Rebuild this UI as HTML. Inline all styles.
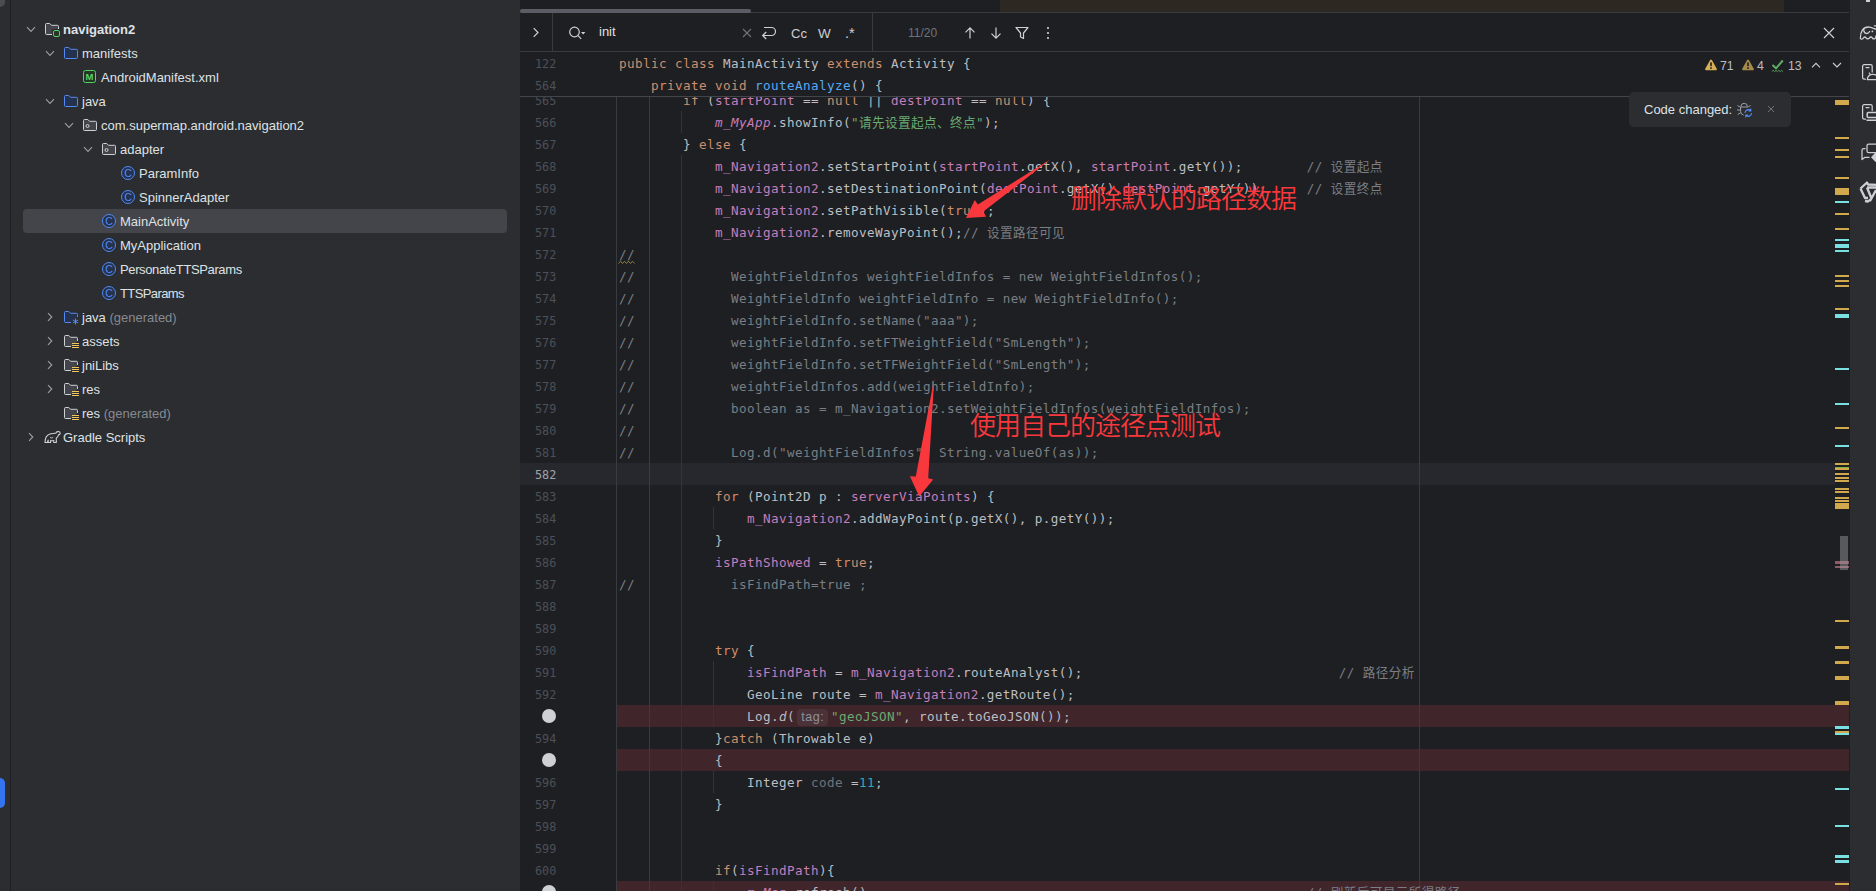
<!DOCTYPE html>
<html lang="zh"><head><meta charset="utf-8"><title>MainActivity</title>
<style>
html,body{margin:0;padding:0;background:#1E1F22;}
body{width:1876px;height:891px;overflow:hidden;position:relative;font-family:"Liberation Sans","Noto Sans CJK SC",sans-serif;font-size:13px;color:#DFE1E5;}
div,span,svg{position:absolute;box-sizing:border-box;}
span{position:static;}
.abs{position:absolute;}
#left{left:0;top:0;width:520px;height:891px;background:#2B2D30;}
.trow{left:0;width:520px;height:24px;line-height:24px;white-space:pre;}
.trow .tx{position:absolute;top:0;height:24px;line-height:25px;font-size:13px;color:#DFE1E5;}
.trow .g{color:#868A91;}
.trow svg{top:4px;}
#ed{left:520px;top:0;width:1329px;height:891px;background:#1E1F22;overflow:hidden;}
.code{left:619px;height:22px;line-height:22px;white-space:pre;font-family:"DejaVu Sans Mono","Noto Sans CJK SC",monospace;font-size:12.6px;letter-spacing:0.415px;color:#BCBEC4;margin-top:1px;}
.k{color:#CF8E6D;} .f{color:#C77DBB;} .sf{color:#C77DBB;font-style:italic;} .s{color:#6AAB73;} .n{color:#2AACB8;}
.c{color:#7A7E85;} .m{color:#56A8F5;} .u{color:#6F737A;} .i{font-style:italic;}
.z{font-weight:400;}
.wavy{text-decoration:underline wavy #8c7a3a;text-decoration-thickness:1px;text-underline-offset:2px;}
.hint{display:inline-block;position:relative;top:0px;height:17px;line-height:17px;margin:0 3px 0 2px;padding:0;width:31px;border-radius:4px;background:#4B3239;color:#8E929A;font-family:"Liberation Sans",sans-serif;font-size:12.5px;letter-spacing:0.6px;text-indent:0.6px;vertical-align:middle;text-align:center;}
.ln{left:0px;width:36.5px;text-align:right;height:22px;line-height:22px;font-family:"DejaVu Sans Mono",monospace;font-size:11.8px;letter-spacing:0.1px;color:#4B5059;margin-top:1px;}
.bp{background:#40252B;left:617px;width:1232px;height:22px;}
.dot{width:14px;height:14px;border-radius:7px;background:#CED0D6;left:542px;}
.vg{width:1px;background:#313438;}
.mk{left:1835px;width:14px;}
.y{background:#D2A84C;} .cy{background:#7ADFE0;}
.red{color:#F8383C;font-family:"Noto Sans CJK SC","Liberation Sans",sans-serif;font-size:26px;letter-spacing:-1px;line-height:30px;white-space:pre;font-weight:350;}
.ui{font-family:"Liberation Sans",sans-serif;font-size:13px;white-space:pre;}
</style></head><body>

<div id="left">
<div class="abs" style="left:0;top:0;width:5px;height:7px;background:#4B4D51;border-radius:0 0 5px 0;"></div>
<div class="abs" style="left:10px;top:0;width:1px;height:891px;background:#1E1F22;"></div>
<div class="abs" style="left:0;top:778px;width:5px;height:30px;background:#3574F0;border-radius:0 5px 5px 0;"></div>
<div class="abs" style="left:23px;top:209px;width:484px;height:24px;background:#43454A;border-radius:4px;"></div>
<div class="trow" style="top:17px">
<svg class="abs" style="left:26px;top:9px" width="10" height="7" viewBox="0 0 10 7"><path d="M1 1.2 L5 5.4 L9 1.2" fill="none" stroke="#9DA0A8" stroke-width="1.1"/></svg>
<svg class="abs" style="left:44px;top:4px" width="17" height="17" viewBox="0 0 17 17"><path d="M1.5 3.5 a1 1 0 0 1 1-1 h3.3 l1.7 1.8 h6 a1 1 0 0 1 1 1 v7.2 a1 1 0 0 1-1 1 h-11 a1 1 0 0 1-1-1 Z" fill="#43454A" stroke="#CED0D6" stroke-width="1"/><rect x="8" y="8" width="9" height="9" fill="#2B2D30"/><rect x="9.5" y="9.5" width="6" height="6" rx="1.5" fill="#253627" stroke="#57D163" stroke-width="1"/></svg>
<span class="tx" style="left:63px;font-weight:bold;">navigation2</span>
</div>
<div class="trow" style="top:41px">
<svg class="abs" style="left:45px;top:9px" width="10" height="7" viewBox="0 0 10 7"><path d="M1 1.2 L5 5.4 L9 1.2" fill="none" stroke="#9DA0A8" stroke-width="1.1"/></svg>
<svg class="abs" style="left:63px;top:4px" width="16" height="16" viewBox="0 0 16 16"><path d="M1.5 3.5 a1 1 0 0 1 1-1 h3.3 l1.7 1.8 h6 a1 1 0 0 1 1 1 v7.2 a1 1 0 0 1-1 1 h-11 a1 1 0 0 1-1-1 Z" fill="#25324D" stroke="#548AF7" stroke-width="1"/></svg>
<span class="tx" style="left:82px;">manifests</span>
</div>
<div class="trow" style="top:65px">
<svg class="abs" style="left:82px;top:4px" width="16" height="16" viewBox="0 0 16 16"><rect x="1.5" y="1.5" width="12" height="12" rx="2" fill="#253627" stroke="#57D163" stroke-width="1"/><text x="7.5" y="11.3" text-anchor="middle" font-family="Liberation Sans, sans-serif" font-weight="bold" font-size="9.5" fill="#57D163">M</text></svg>
<span class="tx" style="left:101px;">AndroidManifest.xml</span>
</div>
<div class="trow" style="top:89px">
<svg class="abs" style="left:45px;top:9px" width="10" height="7" viewBox="0 0 10 7"><path d="M1 1.2 L5 5.4 L9 1.2" fill="none" stroke="#9DA0A8" stroke-width="1.1"/></svg>
<svg class="abs" style="left:63px;top:4px" width="16" height="16" viewBox="0 0 16 16"><path d="M1.5 3.5 a1 1 0 0 1 1-1 h3.3 l1.7 1.8 h6 a1 1 0 0 1 1 1 v7.2 a1 1 0 0 1-1 1 h-11 a1 1 0 0 1-1-1 Z" fill="#25324D" stroke="#548AF7" stroke-width="1"/></svg>
<span class="tx" style="left:82px;">java</span>
</div>
<div class="trow" style="top:113px">
<svg class="abs" style="left:64px;top:9px" width="10" height="7" viewBox="0 0 10 7"><path d="M1 1.2 L5 5.4 L9 1.2" fill="none" stroke="#9DA0A8" stroke-width="1.1"/></svg>
<svg class="abs" style="left:82px;top:4px" width="16" height="16" viewBox="0 0 16 16"><path d="M1.5 3.5 a1 1 0 0 1 1-1 h3.3 l1.7 1.8 h6 a1 1 0 0 1 1 1 v7.2 a1 1 0 0 1-1 1 h-11 a1 1 0 0 1-1-1 Z" fill="#43454A" stroke="#CED0D6" stroke-width="1"/><circle cx="5.5" cy="9" r="1.5" fill="none" stroke="#CED0D6" stroke-width="1"/></svg>
<span class="tx" style="left:101px;">com.supermap.android.navigation2</span>
</div>
<div class="trow" style="top:137px">
<svg class="abs" style="left:83px;top:9px" width="10" height="7" viewBox="0 0 10 7"><path d="M1 1.2 L5 5.4 L9 1.2" fill="none" stroke="#9DA0A8" stroke-width="1.1"/></svg>
<svg class="abs" style="left:101px;top:4px" width="16" height="16" viewBox="0 0 16 16"><path d="M1.5 3.5 a1 1 0 0 1 1-1 h3.3 l1.7 1.8 h6 a1 1 0 0 1 1 1 v7.2 a1 1 0 0 1-1 1 h-11 a1 1 0 0 1-1-1 Z" fill="#43454A" stroke="#CED0D6" stroke-width="1"/><circle cx="5.5" cy="9" r="1.5" fill="none" stroke="#CED0D6" stroke-width="1"/></svg>
<span class="tx" style="left:120px;">adapter</span>
</div>
<div class="trow" style="top:161px">
<svg class="abs" style="left:120px;top:4px" width="16" height="16" viewBox="0 0 16 16"><circle cx="8" cy="8" r="6.5" fill="#25324D" stroke="#548AF7" stroke-width="1"/><text x="8" y="11.7" text-anchor="middle" font-family="Liberation Sans, sans-serif" font-size="10.5" fill="#548AF7">C</text></svg>
<span class="tx" style="left:139px;">ParamInfo</span>
</div>
<div class="trow" style="top:185px">
<svg class="abs" style="left:120px;top:4px" width="16" height="16" viewBox="0 0 16 16"><circle cx="8" cy="8" r="6.5" fill="#25324D" stroke="#548AF7" stroke-width="1"/><text x="8" y="11.7" text-anchor="middle" font-family="Liberation Sans, sans-serif" font-size="10.5" fill="#548AF7">C</text></svg>
<span class="tx" style="left:139px;">SpinnerAdapter</span>
</div>
<div class="trow" style="top:209px">
<svg class="abs" style="left:101px;top:4px" width="16" height="16" viewBox="0 0 16 16"><circle cx="8" cy="8" r="6.5" fill="#25324D" stroke="#548AF7" stroke-width="1"/><text x="8" y="11.7" text-anchor="middle" font-family="Liberation Sans, sans-serif" font-size="10.5" fill="#548AF7">C</text></svg>
<span class="tx" style="left:120px;">MainActivity</span>
</div>
<div class="trow" style="top:233px">
<svg class="abs" style="left:101px;top:4px" width="16" height="16" viewBox="0 0 16 16"><circle cx="8" cy="8" r="6.5" fill="#25324D" stroke="#548AF7" stroke-width="1"/><text x="8" y="11.7" text-anchor="middle" font-family="Liberation Sans, sans-serif" font-size="10.5" fill="#548AF7">C</text></svg>
<span class="tx" style="left:120px;">MyApplication</span>
</div>
<div class="trow" style="top:257px">
<svg class="abs" style="left:101px;top:4px" width="16" height="16" viewBox="0 0 16 16"><circle cx="8" cy="8" r="6.5" fill="#25324D" stroke="#548AF7" stroke-width="1"/><text x="8" y="11.7" text-anchor="middle" font-family="Liberation Sans, sans-serif" font-size="10.5" fill="#548AF7">C</text></svg>
<span class="tx" style="left:120px;letter-spacing:-0.38px;">PersonateTTSParams</span>
</div>
<div class="trow" style="top:281px">
<svg class="abs" style="left:101px;top:4px" width="16" height="16" viewBox="0 0 16 16"><circle cx="8" cy="8" r="6.5" fill="#25324D" stroke="#548AF7" stroke-width="1"/><text x="8" y="11.7" text-anchor="middle" font-family="Liberation Sans, sans-serif" font-size="10.5" fill="#548AF7">C</text></svg>
<span class="tx" style="left:120px;letter-spacing:-0.6px;">TTSParams</span>
</div>
<div class="trow" style="top:305px">
<svg class="abs" style="left:47px;top:7px" width="7" height="10" viewBox="0 0 7 10"><path d="M1 1.2 L4.8 5 L1 8.8" fill="none" stroke="#9DA0A8" stroke-width="1.1"/></svg>
<svg class="abs" style="left:63px;top:4px" width="17" height="17" viewBox="0 0 17 17"><path d="M8 13.5 H2.5 a1 1 0 0 1-1-1 V3.5 a1 1 0 0 1 1-1 h3.3 l1.7 1.8 h6 a1 1 0 0 1 1 1 V8" fill="#25324D" stroke="#548AF7" stroke-width="1"/><path d="M12.5 9.5 v6 M9.9 11 l5.2 3 M9.9 14 l5.2 -3" stroke="#548AF7" stroke-width="1" fill="none"/></svg>
<span class="tx" style="left:82px;">java <span class="g">(generated)</span></span>
</div>
<div class="trow" style="top:329px">
<svg class="abs" style="left:47px;top:7px" width="7" height="10" viewBox="0 0 7 10"><path d="M1 1.2 L4.8 5 L1 8.8" fill="none" stroke="#9DA0A8" stroke-width="1.1"/></svg>
<svg class="abs" style="left:63px;top:4px" width="17" height="17" viewBox="0 0 17 17"><path d="M8 13.5 H2.5 a1 1 0 0 1-1-1 V3.5 a1 1 0 0 1 1-1 h3.3 l1.7 1.8 h6 a1 1 0 0 1 1 1 V8" fill="#43454A" stroke="#CED0D6" stroke-width="1"/><path d="M9 10.5 h7 M9 12.5 h7 M9 14.5 h7" stroke="#F2C55C" stroke-width="1" fill="none"/></svg>
<span class="tx" style="left:82px;">assets</span>
</div>
<div class="trow" style="top:353px">
<svg class="abs" style="left:47px;top:7px" width="7" height="10" viewBox="0 0 7 10"><path d="M1 1.2 L4.8 5 L1 8.8" fill="none" stroke="#9DA0A8" stroke-width="1.1"/></svg>
<svg class="abs" style="left:63px;top:4px" width="17" height="17" viewBox="0 0 17 17"><path d="M8 13.5 H2.5 a1 1 0 0 1-1-1 V3.5 a1 1 0 0 1 1-1 h3.3 l1.7 1.8 h6 a1 1 0 0 1 1 1 V8" fill="#43454A" stroke="#CED0D6" stroke-width="1"/><path d="M9 10.5 h7 M9 12.5 h7 M9 14.5 h7" stroke="#F2C55C" stroke-width="1" fill="none"/></svg>
<span class="tx" style="left:82px;">jniLibs</span>
</div>
<div class="trow" style="top:377px">
<svg class="abs" style="left:47px;top:7px" width="7" height="10" viewBox="0 0 7 10"><path d="M1 1.2 L4.8 5 L1 8.8" fill="none" stroke="#9DA0A8" stroke-width="1.1"/></svg>
<svg class="abs" style="left:63px;top:4px" width="17" height="17" viewBox="0 0 17 17"><path d="M8 13.5 H2.5 a1 1 0 0 1-1-1 V3.5 a1 1 0 0 1 1-1 h3.3 l1.7 1.8 h6 a1 1 0 0 1 1 1 V8" fill="#43454A" stroke="#CED0D6" stroke-width="1"/><path d="M9 10.5 h7 M9 12.5 h7 M9 14.5 h7" stroke="#F2C55C" stroke-width="1" fill="none"/></svg>
<span class="tx" style="left:82px;">res</span>
</div>
<div class="trow" style="top:401px">
<svg class="abs" style="left:63px;top:4px" width="17" height="17" viewBox="0 0 17 17"><path d="M8 13.5 H2.5 a1 1 0 0 1-1-1 V3.5 a1 1 0 0 1 1-1 h3.3 l1.7 1.8 h6 a1 1 0 0 1 1 1 V8" fill="#43454A" stroke="#CED0D6" stroke-width="1"/><path d="M9 10.5 h7 M9 12.5 h7 M9 14.5 h7" stroke="#F2C55C" stroke-width="1" fill="none"/></svg>
<span class="tx" style="left:82px;">res <span class="g">(generated)</span></span>
</div>
<div class="trow" style="top:425px">
<svg class="abs" style="left:28px;top:7px" width="7" height="10" viewBox="0 0 7 10"><path d="M1 1.2 L4.8 5 L1 8.8" fill="none" stroke="#9DA0A8" stroke-width="1.1"/></svg>
<svg class="abs" style="left:44px;top:5px" width="17" height="14" viewBox="0 0 17 14"><path d="M1 12.5 C1 8 2.5 5 6 4 C8 3.4 10.5 3.6 12 3 C12.5 1.5 14.8 1 15.8 2.2 C16.6 3.3 15.8 4.8 14.6 4.6 C14.2 6.5 13.5 7.5 12.3 8 V12.5 H9.8 V10.5 C8.8 10.9 7.6 10.9 6.6 10.5 V12.5 H4.2 V10 C3.8 10.8 3.6 11.6 3.5 12.5 Z" fill="none" stroke="#CED0D6" stroke-width="1.1" stroke-linejoin="round"/><path d="M6 7.2 C6.8 8.2 8.2 8.2 9.2 7.2" fill="none" stroke="#CED0D6" stroke-width="1"/></svg>
<span class="tx" style="left:63px;">Gradle Scripts</span>
</div>
</div>
<div id="edwrap" class="abs" style="left:0;top:0;width:1876px;height:891px;">
<div class="abs" style="left:1000px;top:0;width:784px;height:12px;background:#2E2822;"></div>
<div class="abs" style="left:520px;top:12px;width:1329px;height:1px;background:#393B40;"></div>
<div class="abs" style="left:520px;top:9px;width:231px;height:4px;background:#5A5D63;border-radius:2px;"></div>
<div class="abs" style="left:520px;top:51px;width:1329px;height:1px;background:#393B40;"></div>
<div class="abs" style="left:552px;top:13px;width:1px;height:38px;background:#393B40;"></div>
<div class="abs" style="left:872px;top:13px;width:1px;height:38px;background:#393B40;"></div>
<svg class="abs" style="left:531px;top:26px" width="10" height="13" viewBox="0 0 10 13"><path d="M2.7 2.2 L7 6.5 L2.7 10.8" fill="none" stroke="#CED0D6" stroke-width="1.2"/></svg>
<svg class="abs" style="left:567px;top:24px" width="20" height="18" viewBox="0 0 20 18"><circle cx="7.5" cy="8" r="4.8" fill="none" stroke="#CED0D6" stroke-width="1.2"/><path d="M11 11.6 L14.2 14.8" stroke="#CED0D6" stroke-width="1.2"/><path d="M14 8 h4.4 l-2.2 2.4 z" fill="#CED0D6"/></svg>
<div class="abs ui" style="left:599px;top:23px;height:18px;line-height:18px;color:#DFE1E5;">init</div>
<svg class="abs" style="left:742px;top:28px" width="10" height="10" viewBox="0 0 10 10"><path d="M1 1 L9 9 M9 1 L1 9" stroke="#6F737A" stroke-width="1.1" fill="none"/></svg>
<svg class="abs" style="left:761px;top:25px" width="17" height="16" viewBox="0 0 17 16"><path d="M3 2.5 H10.5 a4 4 0 0 1 0 8 H2" fill="none" stroke="#CED0D6" stroke-width="1.2"/><path d="M5.2 7 L1.7 10.5 L5.2 14" fill="none" stroke="#CED0D6" stroke-width="1.2"/></svg>
<div class="abs ui" style="left:791px;top:25px;height:18px;line-height:18px;color:#CED0D6;">Cc</div>
<div class="abs ui" style="left:818px;top:25px;height:18px;line-height:18px;color:#CED0D6;font-size:13.5px;">W</div>
<div class="abs ui" style="left:845px;top:24px;height:18px;line-height:18px;color:#CED0D6;font-size:14.5px;">.*</div>
<div class="abs ui" style="left:908px;top:24px;height:18px;line-height:18px;color:#6F737A;font-size:12px;">11/20</div>
<svg class="abs" style="left:963px;top:26px" width="14" height="14" viewBox="0 0 14 14"><path d="M7 12.5 V2 M2.5 6.3 L7 1.8 L11.5 6.3" fill="none" stroke="#CED0D6" stroke-width="1.2"/></svg>
<svg class="abs" style="left:989px;top:26px" width="14" height="14" viewBox="0 0 14 14"><path d="M7 1.5 V12 M2.5 7.7 L7 12.2 L11.5 7.7" fill="none" stroke="#CED0D6" stroke-width="1.2"/></svg>
<svg class="abs" style="left:1014px;top:25px" width="16" height="16" viewBox="0 0 16 16"><path d="M2 2.5 H14 L9.5 8 V13.5 L6.5 12 V8 Z" fill="none" stroke="#CED0D6" stroke-width="1.2" stroke-linejoin="round"/></svg>
<svg class="abs" style="left:1046px;top:26px" width="4" height="14" viewBox="0 0 4 14"><circle cx="2" cy="2" r="1.1" fill="#CED0D6"/><circle cx="2" cy="7" r="1.1" fill="#CED0D6"/><circle cx="2" cy="12" r="1.1" fill="#CED0D6"/></svg>
<svg class="abs" style="left:1823px;top:27px" width="12" height="12" viewBox="0 0 12 12"><path d="M1 1 L11 11 M11 1 L1 11" stroke="#CED0D6" stroke-width="1.2" fill="none"/></svg>
<div class="abs" style="left:520px;top:463px;width:1315px;height:22px;background:#26282E;"></div>
<div class="bp" style="top:705px"></div>
<div class="bp" style="top:749px"></div>
<div class="bp" style="top:881px"></div>
<div class="vg" style="left:616px;top:97px;height:794px;background:#393B40;"></div>
<div class="vg" style="left:649px;top:97px;height:794px;background:#393B40;"></div>
<div class="vg" style="left:1419px;top:97px;height:794px;background:#393B40;"></div>
<div class="vg" style="left:681px;top:111px;height:22px;background:#313438"></div>
<div class="vg" style="left:681px;top:155px;height:748px;background:#313438"></div>
<div class="vg" style="left:713px;top:507px;height:22px;background:#313438"></div>
<div class="vg" style="left:713px;top:661px;height:66px;background:#313438"></div>
<div class="vg" style="left:713px;top:771px;height:22px;background:#313438"></div>
<div class="vg" style="left:713px;top:881px;height:22px;background:#313438"></div>
<svg class="abs" style="left:617px;top:258px" width="22" height="8" viewBox="0 0 22 8"><polyline points="1.5,5.5 3.5,3.2 5.5,5.5 7.5,3.2 9.5,5.5 11.5,3.2 13.5,5.5 15.5,3.2 17.5,5.5" fill="none" stroke="#9A8444" stroke-width="0.9"/></svg>
<div class="code" style="top:89px">        <span class="k">if</span> (<span class="f">startPoint</span> == <span class="k">null</span> || <span class="f">destPoint</span> == <span class="k">null</span>) {</div>
<div class="code" style="top:111px">            <span class="sf">m_MyApp</span>.showInfo(<span class="s">"<span class="z">请先设置起点、终点</span>"</span>);</div>
<div class="code" style="top:133px">        } <span class="k">else</span> {</div>
<div class="code" style="top:155px">            <span class="f">m_Navigation2</span>.setStartPoint(<span class="f">startPoint</span>.getX(), <span class="f">startPoint</span>.getY());        <span class="c">// <span class="z">设置起点</span></span></div>
<div class="code" style="top:177px">            <span class="f">m_Navigation2</span>.setDestinationPoint(<span class="f">destPoint</span>.getX(),<span class="f">destPoint</span>.getY());     <span class="c">// <span class="z">设置终点</span></span></div>
<div class="code" style="top:199px">            <span class="f">m_Navigation2</span>.setPathVisible(<span class="k">true</span>);</div>
<div class="code" style="top:221px">            <span class="f">m_Navigation2</span>.removeWayPoint();<span class="c">// <span class="z">设置路径可见</span></span></div>
<div class="code" style="top:243px"><span class="c">//</span></div>
<div class="code" style="top:265px"><span class="c">//            WeightFieldInfos weightFieldInfos = new WeightFieldInfos();</span></div>
<div class="code" style="top:287px"><span class="c">//            WeightFieldInfo weightFieldInfo = new WeightFieldInfo();</span></div>
<div class="code" style="top:309px"><span class="c">//            weightFieldInfo.setName("aaa");</span></div>
<div class="code" style="top:331px"><span class="c">//            weightFieldInfo.setFTWeightField("SmLength");</span></div>
<div class="code" style="top:353px"><span class="c">//            weightFieldInfo.setTFWeightField("SmLength");</span></div>
<div class="code" style="top:375px"><span class="c">//            weightFieldInfos.add(weightFieldInfo);</span></div>
<div class="code" style="top:397px"><span class="c">//            boolean as = m_Navigation2.setWeightFieldInfos(weightFieldInfos);</span></div>
<div class="code" style="top:419px"><span class="c">//</span></div>
<div class="code" style="top:441px"><span class="c">//            Log.d("weightFieldInfos", String.valueOf(as));</span></div>
<div class="code" style="top:485px">            <span class="k">for</span> (Point2D p : <span class="f">serverViaPoints</span>) {</div>
<div class="code" style="top:507px">                <span class="f">m_Navigation2</span>.addWayPoint(p.getX(), p.getY());</div>
<div class="code" style="top:529px">            }</div>
<div class="code" style="top:551px">            <span class="f">isPathShowed</span> = <span class="k">true</span>;</div>
<div class="code" style="top:573px"><span class="c">//            isFindPath=true ;</span></div>
<div class="code" style="top:639px">            <span class="k">try</span> {</div>
<div class="code" style="top:661px">                <span class="f">isFindPath</span> = <span class="f">m_Navigation2</span>.routeAnalyst();                                <span class="c">// <span class="z">路径分析</span></span></div>
<div class="code" style="top:683px">                GeoLine route = <span class="f">m_Navigation2</span>.getRoute();</div>
<div class="code" style="top:705px">                Log.<span class="i">d</span>(<span class="hint">tag:</span><span class="s">"geoJSON"</span>, route.toGeoJSON());</div>
<div class="code" style="top:727px">            }<span class="k">catch</span> (Throwable e)</div>
<div class="code" style="top:749px">            {</div>
<div class="code" style="top:771px">                Integer <span class="u">code</span> =<span class="n">11</span>;</div>
<div class="code" style="top:793px">            }</div>
<div class="code" style="top:859px">            <span class="k">if</span>(<span class="f">isFindPath</span>){</div>
<div class="code" style="top:881px">                <span class="sf">m_Map</span>.refresh();                                                      <span class="c">// <span class="z">刷新后可显示所得路径</span></span></div>
<div class="ln" style="left:520px;top:89px;">565</div>
<div class="ln" style="left:520px;top:111px;">566</div>
<div class="ln" style="left:520px;top:133px;">567</div>
<div class="ln" style="left:520px;top:155px;">568</div>
<div class="ln" style="left:520px;top:177px;">569</div>
<div class="ln" style="left:520px;top:199px;">570</div>
<div class="ln" style="left:520px;top:221px;">571</div>
<div class="ln" style="left:520px;top:243px;">572</div>
<div class="ln" style="left:520px;top:265px;">573</div>
<div class="ln" style="left:520px;top:287px;">574</div>
<div class="ln" style="left:520px;top:309px;">575</div>
<div class="ln" style="left:520px;top:331px;">576</div>
<div class="ln" style="left:520px;top:353px;">577</div>
<div class="ln" style="left:520px;top:375px;">578</div>
<div class="ln" style="left:520px;top:397px;">579</div>
<div class="ln" style="left:520px;top:419px;">580</div>
<div class="ln" style="left:520px;top:441px;">581</div>
<div class="ln" style="left:520px;top:463px;color:#A1A3AB;">582</div>
<div class="ln" style="left:520px;top:485px;">583</div>
<div class="ln" style="left:520px;top:507px;">584</div>
<div class="ln" style="left:520px;top:529px;">585</div>
<div class="ln" style="left:520px;top:551px;">586</div>
<div class="ln" style="left:520px;top:573px;">587</div>
<div class="ln" style="left:520px;top:595px;">588</div>
<div class="ln" style="left:520px;top:617px;">589</div>
<div class="ln" style="left:520px;top:639px;">590</div>
<div class="ln" style="left:520px;top:661px;">591</div>
<div class="ln" style="left:520px;top:683px;">592</div>
<div class="dot" style="top:709px"></div>
<div class="ln" style="left:520px;top:727px;">594</div>
<div class="dot" style="top:753px"></div>
<div class="ln" style="left:520px;top:771px;">596</div>
<div class="ln" style="left:520px;top:793px;">597</div>
<div class="ln" style="left:520px;top:815px;">598</div>
<div class="ln" style="left:520px;top:837px;">599</div>
<div class="ln" style="left:520px;top:859px;">600</div>
<div class="dot" style="top:885px"></div>
<div class="abs" style="left:520px;top:52px;width:1329px;height:44px;background:#1E1F22;"></div>
<div class="abs" style="left:520px;top:96px;width:1329px;height:1px;background:#43454A;"></div>
<div class="ln" style="left:520px;top:52px;">122</div>
<div class="ln" style="left:520px;top:74px;">564</div>
<div class="code" style="top:52px"><span class="k">public</span> <span class="k">class</span> MainActivity <span class="k">extends</span> Activity {</div>
<div class="code" style="top:74px">    <span class="k">private</span> <span class="k">void</span> <span class="m">routeAnalyze</span>() {</div>
<svg class="abs" style="left:1704px;top:58px" width="14" height="14" viewBox="0 0 14 14"><path d="M7 2.6 L11.9 11.3 H2.1 Z" fill="#D6AE58" stroke="#D6AE58" stroke-width="2" stroke-linejoin="round"/><rect x="6.2" y="4.4" width="1.6" height="3.8" fill="#1E1F22"/><rect x="6.2" y="9.3" width="1.6" height="1.6" fill="#1E1F22"/></svg>
<div class="abs ui" style="left:1720px;top:57px;height:18px;line-height:18px;color:#BCBEC4;font-size:12.3px;">71</div>
<svg class="abs" style="left:1741px;top:58px" width="14" height="14" viewBox="0 0 14 14"><path d="M7 2.6 L11.9 11.3 H2.1 Z" fill="#A68A4A" stroke="#A68A4A" stroke-width="2" stroke-linejoin="round"/><rect x="6.2" y="4.4" width="1.6" height="3.8" fill="#1E1F22"/><rect x="6.2" y="9.3" width="1.6" height="1.6" fill="#1E1F22"/></svg>
<div class="abs ui" style="left:1757px;top:57px;height:18px;line-height:18px;color:#BCBEC4;font-size:12.3px;">4</div>
<svg class="abs" style="left:1771px;top:58px" width="14" height="15" viewBox="0 0 14 15"><path d="M1.5 7 L5 10.3 L11.8 2.5" fill="none" stroke="#5FAD65" stroke-width="2"/><path d="M0.8 13.6 l1.4 -1.3 l1.4 1.3 l1.4 -1.3 l1.4 1.3 l1.4 -1.3 l1.4 1.3 l1.4 -1.3 l1.4 1.3" fill="none" stroke="#5FAD65" stroke-width="0.9"/></svg>
<div class="abs ui" style="left:1788px;top:57px;height:18px;line-height:18px;color:#BCBEC4;font-size:12.3px;">13</div>
<svg class="abs" style="left:1810px;top:61px" width="12" height="8" viewBox="0 0 12 8"><path d="M2 6.3 L6 2.3 L10 6.3" fill="none" stroke="#CED0D6" stroke-width="1.1"/></svg>
<svg class="abs" style="left:1831px;top:61px" width="12" height="8" viewBox="0 0 12 8"><path d="M2 2 L6 6 L10 2" fill="none" stroke="#CED0D6" stroke-width="1.1"/></svg>
<div class="mk y" style="top:100px;height:5px"></div>
<div class="mk y" style="top:137px;height:2px"></div>
<div class="mk y" style="top:149px;height:2px"></div>
<div class="mk y" style="top:156px;height:2px"></div>
<div class="mk y" style="top:177px;height:2px"></div>
<div class="mk y" style="top:188px;height:7px"></div>
<div class="mk cy" style="top:201px;height:2px"></div>
<div class="mk y" style="top:213px;height:2px"></div>
<div class="mk y" style="top:228px;height:2px"></div>
<div class="mk cy" style="top:239px;height:2px"></div>
<div class="mk cy" style="top:244px;height:4px"></div>
<div class="mk cy" style="top:250px;height:2px"></div>
<div class="mk y" style="top:275px;height:2px"></div>
<div class="mk y" style="top:280px;height:2px"></div>
<div class="mk y" style="top:285px;height:2px"></div>
<div class="mk y" style="top:308px;height:2px"></div>
<div class="mk cy" style="top:314px;height:4px"></div>
<div class="mk cy" style="top:368px;height:2px"></div>
<div class="mk cy" style="top:403px;height:2px"></div>
<div class="mk y" style="top:427px;height:2px"></div>
<div class="mk cy" style="top:445px;height:2px"></div>
<div class="mk y" style="top:463px;height:2px"></div>
<div class="mk y" style="top:468px;height:2px"></div>
<div class="mk y" style="top:473px;height:2px"></div>
<div class="mk y" style="top:477px;height:2px"></div>
<div class="mk y" style="top:480px;height:2px"></div>
<div class="mk y" style="top:488px;height:2px"></div>
<div class="mk y" style="top:491px;height:2px"></div>
<div class="mk y" style="top:497px;height:2px"></div>
<div class="mk y" style="top:500px;height:2px"></div>
<div class="mk y" style="top:503px;height:6px"></div>
<div class="mk y" style="top:620px;height:2px"></div>
<div class="mk y" style="top:646px;height:3px"></div>
<div class="mk y" style="top:661px;height:3px"></div>
<div class="mk y" style="top:676px;height:4px"></div>
<div class="mk y" style="top:701px;height:4px"></div>
<div class="mk cy" style="top:726px;height:3px"></div>
<div class="mk y" style="top:731px;height:2px"></div>
<div class="mk cy" style="top:733px;height:2px"></div>
<div class="mk cy" style="top:788px;height:2px"></div>
<div class="mk cy" style="top:825px;height:2px"></div>
<div class="mk cy" style="top:855px;height:3px"></div>
<div class="mk cy" style="top:860px;height:3px"></div>
<div class="mk y" style="top:883px;height:2px"></div>
<div class="mk" style="top:467px;height:1px;background:#7FB04A"></div>
<div class="mk" style="top:561px;height:3px;background:#8E5A68"></div>
<div class="mk" style="top:566px;height:2px;background:#8E5A68"></div>
<div class="abs" style="left:1840px;top:536px;width:8px;height:34px;background:rgba(160,160,165,0.45);"></div>
<div class="abs" style="left:1629px;top:92px;width:162px;height:35px;background:#2B2D30;border-radius:5px;"></div>
<div class="abs ui" style="left:1644px;top:101px;height:18px;line-height:18px;color:#DFE1E5;">Code changed:</div>
<svg class="abs" style="left:1736px;top:101px" width="17" height="17" viewBox="0 0 17 17"><path d="M5 5.5 a3.2 3.2 0 0 1 6.4 0 M4.2 6 H12 M4.6 6 V10.5 a3.6 3.6 0 0 0 3 3.5 M1.5 4.5 l2.5 1.5 M1 9 h3.2 M1.7 13.5 l2.7 -1.7 M14.5 4.5 l-2.3 1.4" fill="none" stroke="#9DA0A8" stroke-width="1"/><path d="M9 12 a3.3 3.3 0 0 1 5.8 -2.2 M15.6 12 a3.3 3.3 0 0 1 -5.8 2.2 M14.8 7.6 v2.4 h-2.4 M9.8 16.4 v-2.4 h2.4" fill="none" stroke="#548AF7" stroke-width="1.1"/></svg>
<svg class="abs" style="left:1767px;top:105px" width="8" height="8" viewBox="0 0 8 8"><path d="M1 1 L7 7 M7 1 L1 7" stroke="#6F737A" stroke-width="1.0" fill="none"/></svg>
<svg class="abs" style="left:0;top:0" width="1876" height="891" viewBox="0 0 1876 891"><polygon points="1051,159 977.9,204.5 974.8,200 966,218 986,216.7 983.4,211.6" fill="#F8383C"/><polygon points="934.3,378 928.2,478.2 933.2,479.4 919.2,496.5 909.9,476.3 915.8,476.6" fill="#F8383C"/></svg>
<div class="abs red" style="left:1071px;top:182px;">删除默认的路径数据</div>
<div class="abs red" style="left:970px;top:409px;">使用自己的途径点测试</div>
<div class="abs" style="left:1849px;top:0;width:27px;height:891px;background:#2B2D30;"></div>
<div class="abs" style="left:1849px;top:0;width:1px;height:891px;background:#1E1F22;"></div>
<svg class="abs" style="left:1859px;top:24px" width="17" height="17" viewBox="0 0 17 17"><path d="M1.4 14.6 C1.3 11 2 8 3.5 5.8 C5 3.8 7 3 9.3 3 C12 3 14 4.2 17.5 5.5 M4.8 4.4 C4.6 7 5.3 9.3 7.6 9.5 C9 9.5 10 8.8 10.6 7.5 M1.4 14.6 C2.2 15.4 3.6 15.4 4.4 14 C5 12.7 6.2 12.7 7 13.8 C8 15.2 9.6 15.2 10.5 13.8 C11.2 12.7 12.6 12.7 13.4 14 C14.4 15.4 16 15.3 16.6 13.5 C16.9 12.3 17.3 11.3 18 10.6 M15.4 1.9 h2.5" fill="none" stroke="#CED0D6" stroke-width="1.3" stroke-linecap="round"/><circle cx="13.4" cy="7.4" r="0.9" fill="#CED0D6"/></svg>
<svg class="abs" style="left:1859px;top:63px" width="17" height="18" viewBox="0 0 17 18"><path d="M13.2 9 V3.3 a1.6 1.6 0 0 0 -1.6 -1.6 H5.2 a1.6 1.6 0 0 0 -1.6 1.6 V14.6 a1.6 1.6 0 0 0 1.6 1.6 H6.3 M7 4.5 H10 M8.3 16.6 C8.6 13 11 11.3 14 11.3 C17 11.3 19.4 13 19.7 16.6 Z M10.3 10 l1 1.6" fill="none" stroke="#CED0D6" stroke-width="1.25" stroke-linejoin="round" stroke-linecap="round"/></svg>
<svg class="abs" style="left:1859px;top:103px" width="17" height="19" viewBox="0 0 17 19"><path d="M13.2 7.5 V3.3 a1.6 1.6 0 0 0 -1.6 -1.6 H5.2 a1.6 1.6 0 0 0 -1.6 1.6 V14.6 a1.6 1.6 0 0 0 1.6 1.6 H6.5 M7 4.5 H10" fill="none" stroke="#CED0D6" stroke-width="1.25" stroke-linecap="round"/><path d="M17.5 9.4 H9.2 a1 1 0 0 0 -1 1 V13.6 a1 1 0 0 0 1 1 H17.5 M7.5 17.3 H17.5" fill="none" stroke="#CED0D6" stroke-width="1.5"/></svg>
<svg class="abs" style="left:1859px;top:142px" width="17" height="21" viewBox="0 0 17 21"><path d="M8 5.5 V3.8 a1.6 1.6 0 0 1 1.6 -1.6 H17.5 M8 5.5 V9 a1.6 1.6 0 0 0 1.6 1.6 H17.5 M6.5 6.5 H4.8 a1.8 1.8 0 0 0 -1.8 1.8 V17.6 L6 15.3 H10.5" fill="none" stroke="#CED0D6" stroke-width="1.25" stroke-linejoin="round"/><path d="M12 15.3 L16.5 10.5 L21 15.3 L16.5 20 Z" fill="#CED0D6"/></svg>
<svg class="abs" style="left:1859px;top:181px" width="17" height="22" viewBox="0 0 17 22"><path d="M1.5 7.5 L8 1.5 L9 3.5 L17.5 4 M1.5 7.5 L6 17 L9 17 M8 6.5 L12.5 17.5 L9 20.5 L6 20 M8 6.5 L17.5 6.5 M17 9 L11 20" fill="none" stroke="#CED0D6" stroke-width="2.3" stroke-linejoin="round"/></svg>
<div class="abs" style="left:1866px;top:0;width:4px;height:2px;background:#CED0D6;"></div>
</div>
</body></html>
